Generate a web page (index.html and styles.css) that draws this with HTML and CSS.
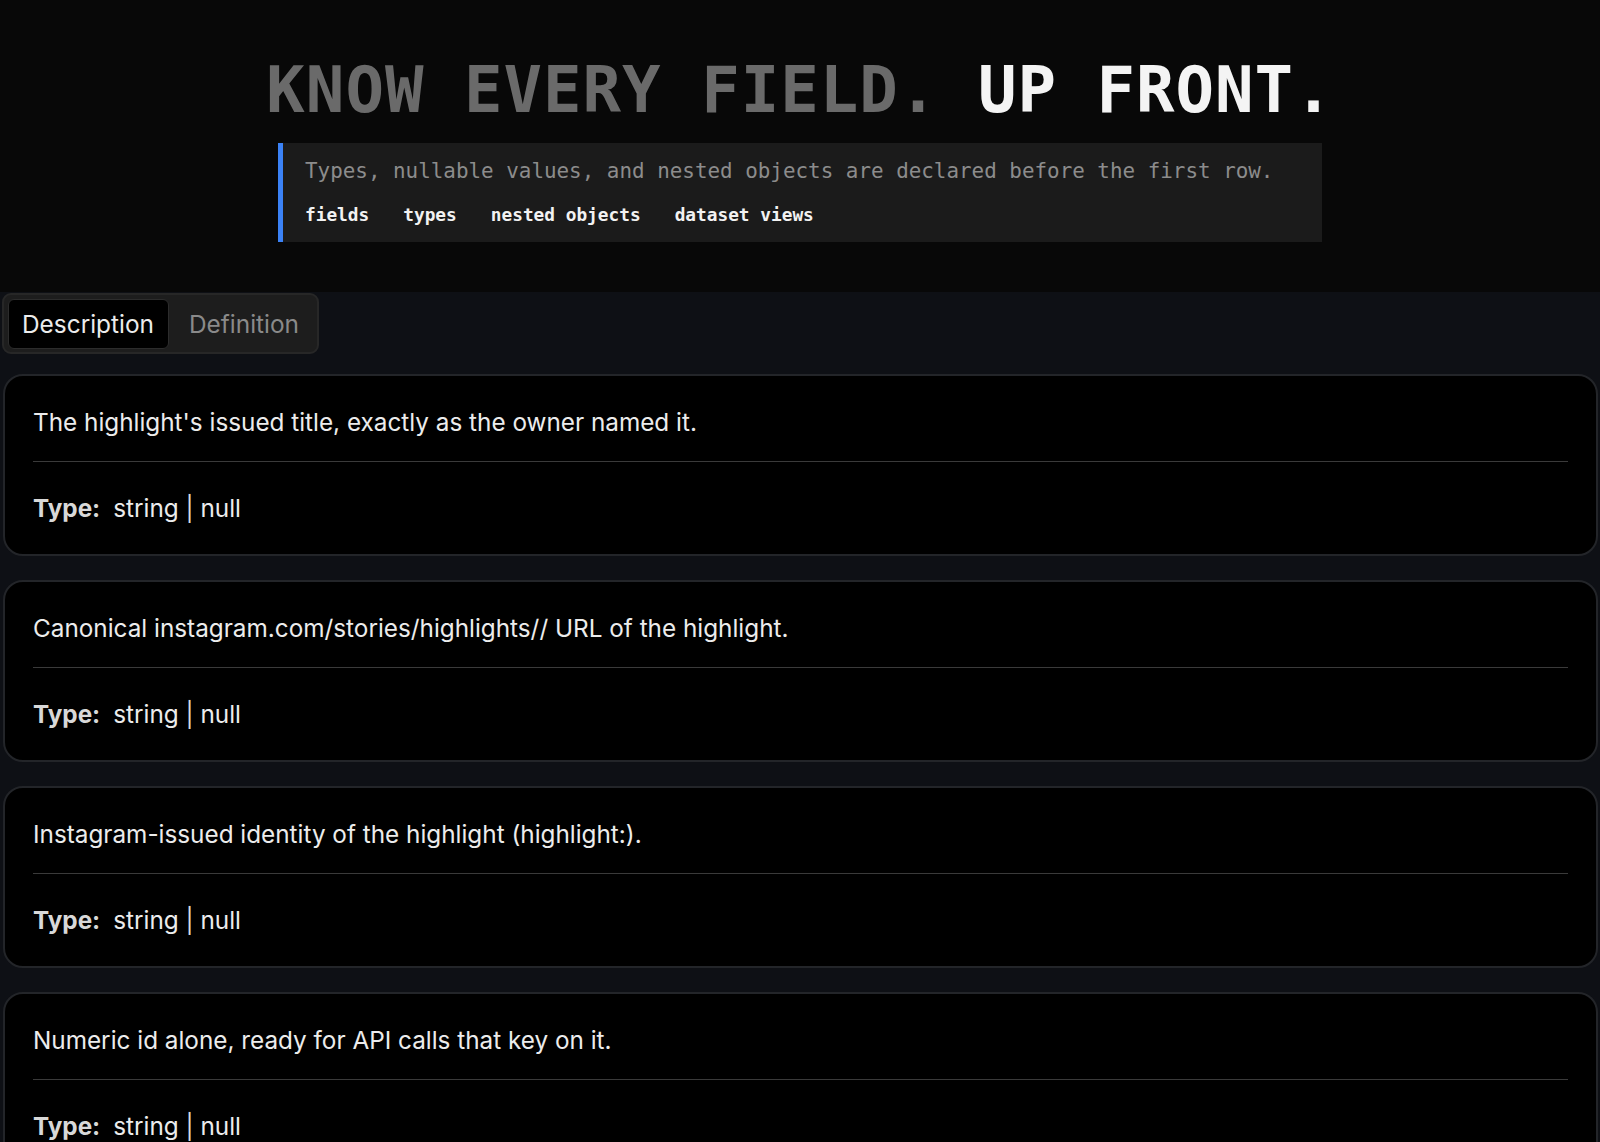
FILE: index.html
```html
<!DOCTYPE html>
<html lang="en">
<head>
<meta charset="utf-8">
<title>Know every field</title>
<link rel="stylesheet" href="styles.css">
</head>
<body>
<header class="hero">
  <h1 class="hero-title"><span class="dim">KNOW EVERY FIELD.</span> <span class="bright">UP FRONT.</span></h1>
  <div class="callout">
    <p class="callout-text">Types, nullable values, and nested objects are declared before the first row.</p>
    <ul class="tags">
      <li>fields</li>
      <li>types</li>
      <li>nested objects</li>
      <li>dataset views</li>
    </ul>
  </div>
</header>
<main class="schema">
  <div class="tabs">
    <button class="tab active">Description</button>
    <button class="tab">Definition</button>
  </div>
  <section class="cards">
    <article class="card">
      <p class="desc">The highlight's issued title, exactly as the owner named it.</p>
      <div class="type"><span class="type-label">Type:</span><span class="type-val">string <span class="bar">|</span> null</span></div>
    </article>
    <article class="card">
      <p class="desc">Canonical instagram.com/stories/highlights// URL of the highlight.</p>
      <div class="type"><span class="type-label">Type:</span><span class="type-val">string <span class="bar">|</span> null</span></div>
    </article>
    <article class="card">
      <p class="desc">Instagram-issued identity of the highlight (highlight:).</p>
      <div class="type"><span class="type-label">Type:</span><span class="type-val">string <span class="bar">|</span> null</span></div>
    </article>
    <article class="card">
      <p class="desc">Numeric id alone, ready for API calls that key on it.</p>
      <div class="type"><span class="type-label">Type:</span><span class="type-val">string <span class="bar">|</span> null</span></div>
    </article>
  </section>
</main>
</body>
</html>
```
FILE: styles.css
```css
* { box-sizing: border-box; }
html, body { margin: 0; padding: 0; }
body {
  background: #0e1015;
  color: #eaeaea;
  font-family: Inter, "Noto Sans", sans-serif;
}
.hero {
  background: #080808;
  padding: 52px 0 50px;
  display: flex;
  flex-direction: column;
  align-items: center;
}
.hero-title {
  margin: 0;
  font-family: "DejaVu Sans Mono", monospace;
  font-weight: bold;
  font-size: 64px;
  line-height: 76px;
  letter-spacing: 1px;
  white-space: nowrap;
}
.dim { color: #6a6a6a; }
.bright { color: #f4f4f4; }
.callout {
  margin-top: 15px;
  width: 1044px;
  background: #1b1b1b;
  border-left: 5px solid #3b82f6;
  padding: 14px 22px 15px;
  font-family: "DejaVu Sans Mono", monospace;
}
.callout-text {
  margin: 0;
  font-size: 20.9px;
  line-height: 28px;
  color: #8c8c8c;
}
.tags {
  list-style: none;
  margin: 18px 0 0;
  padding: 0;
  display: flex;
  gap: 34px;
  font-size: 17.8px;
  line-height: 24px;
  font-weight: bold;
  color: #f2f2f2;
}
.schema {
  padding: 1px 2px 0 3px;
}
.tabs {
  display: inline-flex;
  margin-left: -1px;
  padding: 4px 3px 3px 4px;
  gap: 6px;
  background: #1d1d1d;
  border: 2px solid #272727;
  border-radius: 9px;
}
.tab {
  font-family: Inter, "Noto Sans", sans-serif;
  font-size: 24.4px;
  line-height: 28px;
  padding: 10px 14px 10px 13px;
  background: transparent;
  color: #8a8a8a;
  border: 1px solid transparent;
  border-radius: 6px;
}
.tab.active {
  background: #000;
  color: #ececec;
  border-color: #2c2c2c;
}
.cards {
  margin-top: 20px;
  display: flex;
  flex-direction: column;
  gap: 24px;
}
.card {
  background: #000;
  border: 2px solid #232529;
  border-radius: 20px;
  padding: 28px 28px 28px 28px;
}
.desc {
  margin: 0;
  font-size: 24.3px;
  line-height: 36px;
  color: #ececec;
  padding-bottom: 21px;
  border-bottom: 1px solid #3a3a3a;
}
.type {
  margin-top: 28px;
  font-size: 24.3px;
  line-height: 36px;
  display: flex;
  gap: 13px;
  color: #ececec;
}
.type-label {
  font-weight: bold;
  color: #d8d8d8;
}
.bar { color: #dcdcdc; }
```
